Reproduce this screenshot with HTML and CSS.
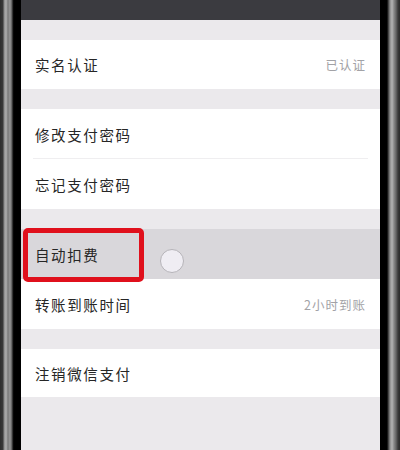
FILE: index.html
```html
<!DOCTYPE html>
<html lang="zh">
<head>
<meta charset="utf-8">
<link rel="stylesheet" href="styles.css">
</head>
<body>
<div class="phone">
  <div class="bezel-left"></div>
  <div class="screen">
    <div class="topbar"></div>
    <div class="gap"></div>
    <div class="group">
      <div class="row"><span class="label">实名认证</span><span class="value">已认证</span></div>
    </div>
    <div class="gap"></div>
    <div class="group">
      <div class="row sep"><span class="label">修改支付密码</span></div>
      <div class="row"><span class="label">忘记支付密码</span></div>
    </div>
    <div class="gap"></div>
    <div class="group">
      <div class="row pressed">
        <span class="label">自动扣费</span>
        <div class="highlight"></div>
        <div class="touch"></div>
      </div>
      <div class="row"><span class="label">转账到账时间</span><span class="value">2小时到账</span></div>
    </div>
    <div class="gap"></div>
    <div class="group">
      <div class="row last"><span class="label">注销微信支付</span></div>
    </div>
  </div>
  <div class="bezel-right"></div>
</div>
</body>
</html>
```

FILE: styles.css
```css
html, body {
  margin: 0;
  padding: 0;
  background: #000;
}
.phone {
  display: flex;
  width: 400px;
  height: 450px;
  overflow: hidden;
}
.bezel-left {
  width: 21px;
  flex: none;
  background: linear-gradient(to right, #2e2e2e 0px, #3a3a3a 3px, #8a8a8a 4px, #b0b0b0 6px, #7a7a7a 8px, #9a9a9a 10px, #5a5a5a 12px, #111 13px, #000 14px, #000 21px);
}
.bezel-right {
  width: 20px;
  flex: none;
  background: linear-gradient(to right, #000 0px, #000 7px, #333 8px, #8c8c8c 10px, #b4b4b4 12px, #888 14px, #666 16px, #3a3a3a 18px, #2a2a2a 20px);
}
.screen {
  width: 359px;
  flex: none;
  background: #ebe9ec;
  font-family: "Noto Sans CJK SC", "Noto Sans", sans-serif;
}
.topbar {
  height: 20px;
  background: #3b3b40;
}
.gap {
  height: 20px;
}
.screen > .gap:first-of-type {
  height: 21px;
}
.group {
  background: #fff;
}
.row {
  position: relative;
  height: 49px;
  display: flex;
  align-items: center;
  justify-content: space-between;
  padding: 0 14px 0 14px;
}
.row.sep::after {
  content: "";
  position: absolute;
  left: 12px;
  right: 12px;
  bottom: 0;
  height: 1px;
  background: #efeef0;
}
.row.sep {
  height: 50px;
}
.group .row + .row {
  height: 50px;
}
.row.last {
  height: 48px;
}
.label {
  font-size: 14.5px;
  letter-spacing: 1.6px;
  color: #262626;
}
.value {
  font-size: 12.5px;
  letter-spacing: 1px;
  color: #a2a2a6;
}
.pressed {
  background: #d9d7db;
  height: 50px;
}
.highlight {
  position: absolute;
  left: 2px;
  top: -1px;
  width: 111px;
  height: 44px;
  border: 5px solid #e0101c;
  border-radius: 5px;
}
.touch {
  position: absolute;
  left: 139px;
  top: 20px;
  width: 22px;
  height: 22px;
  border-radius: 50%;
  background: #efedf3;
  border: 1px solid #b5b3b8;
}
```
